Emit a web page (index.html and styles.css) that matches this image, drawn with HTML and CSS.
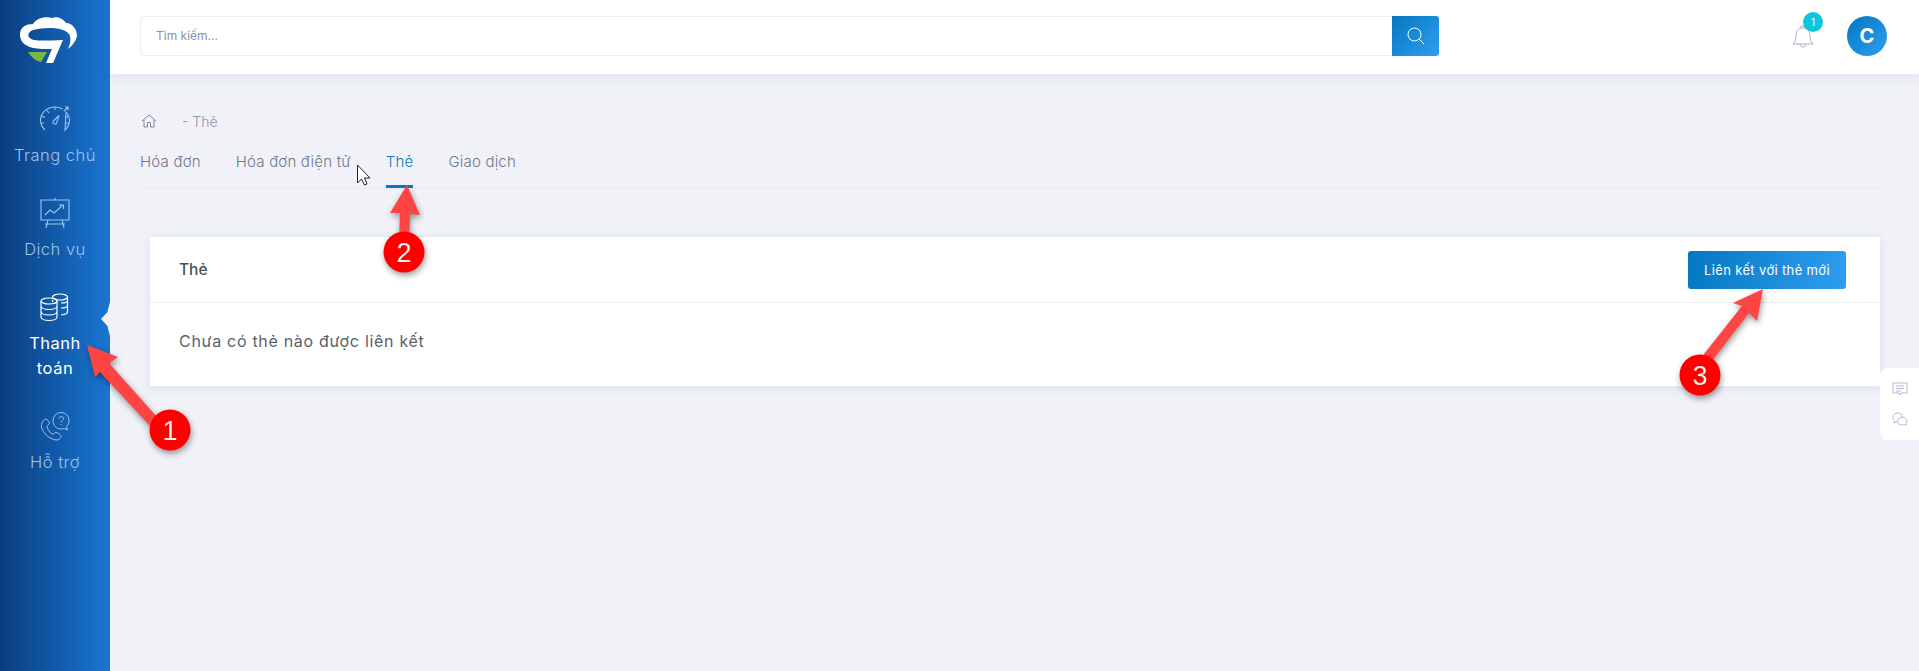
FILE: index.html
```html
<!DOCTYPE html>
<html lang="vi">
	<head>
		<meta charset="UTF-8" />
		<meta name="viewport" content="width=device-width, initial-scale=1.0" />
		<title>Thẻ</title>
		<link rel="stylesheet" href="styles.css">
	</head>
	<body>
		<aside class="sidebar">
			<svg class="logo" width="110" height="74" viewBox="0 0 110 74">
				<path fill="#fff" d="M33 48C24 46 19 40 20 33C21 27 26 24 33 24C36 19 44 16 52 18C58 16 63 19 66 23C72 23 77 29 77 36C76 41 72 46 68 49C70 44 71 40 70 36C69 33 66 31 63 30C54 27 42 28 33 30C28 32 27 36 30 38C33 41 40 41 63 40L53 63L46 63L52 49C45 49 39 49 33 48Z" />
				<path fill="#7ab648" d="M28 52L47 52L41 62C36 61 31 57 28 52Z" />
			</svg>
			<nav class="nav">
				<a class="nav-item">
					<svg viewBox="0 0 32 32" fill="none" stroke="currentColor" stroke-width="1.1">
						<path d="M6 27C3 24 1.500 21 1.500 17.500C1.500 10 8 4 16 4C19 4 21.500 4.800 23.500 6M27 9C29.300 11.500 30.500 14.500 30.500 17.500C30.500 21 29 24 26 27Z" />
						<path d="M25 8L29 4M26 4H29V7M16 4V7M8 7.500L10 10M3 13L6 14.500M2 20H5M29.500 13L26 14.500M30 20H27" />
						<path d="M14 18.500L20 12.500L17.500 20.500C16 22 13 20 14 18.500Z" />
					</svg>
					<span>Trang chủ</span>
				</a>
				<a class="nav-item">
					<svg viewBox="0 0 32 32" fill="none" stroke="currentColor" stroke-width="1.1">
						<path d="M2 3H30V23H2ZM16 1V3M9 23L7 31M23 23L25 31M6 27H26" />
						<path d="M6 18L11 13L15 16L24 8M20 8H24.500V12" />
					</svg>
					<span>Dịch vụ</span>
				</a>
				<a class="nav-item active">
					<svg viewBox="0 0 32 32" fill="none" stroke="currentColor" stroke-width="1.200">
						<ellipse cx="21" cy="6" rx="7.500" ry="3" />
						<path d="M28.500 6V21C28.500 22.500 26 23.500 22 24M13.500 9V11M22 12C26 12 28.500 11 28.500 9.500M22 17C26 17 28.500 16 28.500 14.500" />
						<ellipse cx="10" cy="10" rx="8" ry="3" />
						<path d="M2 10V26C2 28 5.500 29.500 10 29.500C14.500 29.500 18 28 18 26V10M2 15C2 17 5.500 18.500 10 18.500C14.500 18.500 18 17 18 15M2 20.500C2 22.500 5.500 24 10 24C14.500 24 18 22.500 18 20.500" />
					</svg>
					<span>Thanh<br />toán</span>
				</a>
				<a class="nav-item">
					<svg viewBox="0 0 32 32" fill="none" stroke="currentColor" stroke-width="1">
						<path d="M7 9C4 10 2 13 2.500 17C4 23 10 29 17 30C20 30.500 23 27 22 25.500C21 24 18 22.500 17 22.500C15.500 22.500 15 24.500 13.500 24C10.500 22.500 8.500 19.500 8 16.500C8 15 10.500 14.500 10.500 13C10.500 12 8 9 7 9Z" />
						<path d="M22 19C17 19 14 15 14 11C14 6 18 2.500 22 2.500C26.500 2.500 30 6 30 11C30 13.500 29 15.500 27.500 16.500L28.500 20L25 18.500C24 19 23 19 22 19Z" />
						<path d="M20 8.500C20 6 24.500 6 24.500 8.500C24.500 10.500 22.300 10.500 22.300 12.500M22.300 14V15" />
					</svg>
					<span>Hỗ trợ</span>
				</a>
			</nav>
		</aside>

		<div class="main">
			<header class="topbar">
				<form class="search">
					<div class="search-input">Tìm kiếm...</div>
					<button class="search-btn" type="button">
						<svg width="18" height="18" viewBox="0 0 18 18" fill="none" stroke="#fff" stroke-width="1">
							<circle cx="7.500" cy="7.500" r="6.500" />
							<path d="M12 12L17 17" />
						</svg>
					</button>
				</form>
				<div class="bell">
					<svg width="22" height="24" viewBox="0 0 22 24" fill="none" stroke="#a9aec4" stroke-width="1">
						<path d="M1 20C3 18 4 16 4 12C4 7 6 4 11 4C16 4 18 7 18 12C18 16 19 18 21 20ZM9 4V2H13V4M8 20C8 24 14 24 14 20" />
					</svg>
					<span class="bell-badge">1</span>
				</div>
				<div class="avatar">C</div>
			</header>

			<main class="content">
				<div class="breadcrumb">
					<svg width="16" height="14" viewBox="0 0 16 14" fill="none" stroke="#7f8799" stroke-width="1">
						<path d="M1 7L8 1L15 7M3 6V13H6.500V8.500H9.500V13H13V6" />
					</svg>
					<span class="crumb">- Thẻ</span>
				</div>
				<div class="tabs">
					<a class="tab">Hóa đơn</a>
					<a class="tab">Hóa đơn điện tử</a>
					<a class="tab active">Thẻ</a>
					<a class="tab">Giao dịch</a>
				</div>
				<section class="card">
					<div class="card-head">
						<h3 class="card-title">Thẻ</h3>
						<button class="link-btn" type="button">Liên kết với thẻ mới</button>
					</div>
					<div class="card-body">Chưa có thẻ nào được liên kết</div>
				</section>
			</main>
		</div>

		<div class="float-tools">
			<svg width="16" height="14" viewBox="0 0 16 14" fill="none" stroke="#b4b8d2" stroke-width="1">
				<path d="M1 1H15V11H9L8 13L7 11H1ZM4 4H12M4 6.500H12M4 9H9" />
			</svg>
			<svg width="16" height="14" viewBox="0 0 16 14" fill="none" stroke="#b4b8d2" stroke-width="1">
				<path d="M6 1C3 1 1 3 1 5.500C1 7 2 8 2.500 9L2 11L5 10M6 1C8.500 1 10 2.500 10.500 5M5.500 9.500C5.500 7 8 5 10.500 5C13 5 15 7 15 9C15 10 14.500 11 14 11.500L14.500 13L12.500 12.500C10 13.500 5.500 12.500 5.500 9.500Z" />
			</svg>
		</div>

		<!-- hand-drawn annotations on top of the screenshot -->
		<svg class="notes" width="1919" height="671" viewBox="0 0 1919 671">
			<g class="arrow">
				<path fill="#ff4444" d="M87 345L118 357L109 363L158 418L150 426L100 372L95 377Z" />
				<circle cx="170" cy="430" r="20.500" fill="#f00" />
				<text x="170" y="440" class="num">1</text>
			</g>
			<g class="arrow">
				<path fill="#ff4444" d="M407 185L420 215L410 214L409 240H399L400 213L390 213Z" />
				<circle cx="404" cy="252" r="20.500" fill="#f00" />
				<text x="404" y="262" class="num">2</text>
			</g>
			<g class="arrow">
				<path fill="#ff4444" d="M1763 289L1757 321L1749 313L1708 366L1700 359L1742 306L1733 303Z" />
				<circle cx="1700" cy="375" r="20.500" fill="#f00" />
				<text x="1700" y="385" class="num">3</text>
			</g>
			<path fill="#fff" stroke="#222" stroke-width="1" d="M357.500 165V183L361.500 179L364.500 185L367 184L364.500 178L370 178Z" />
		</svg>
	</body>
</html>
```

FILE: styles.css
```css
* {
	box-sizing: border-box;
}
html,
body {
	height: 100%;
}
body {
	position: relative;
	display: flex;
	margin: 0;
	overflow: hidden;
	font-family: Inter, "Open Sans", sans-serif;
	color: #5a5f6a;
	background-color: #f0f2f8;
}

/* sidebar */
.sidebar {
	flex: 0 0 110px;
	background: linear-gradient(90deg, #0a3d7e 0%, #1976d2 100%);
}
.logo {
	display: block;
}
.nav {
	display: flex;
	flex-direction: column;
	gap: 30px;
	padding-top: 29px;
}
.nav-item {
	position: relative;
	display: flex;
	flex-direction: column;
	align-items: center;
	gap: 8px;
	margin-bottom: -1px;
	font-size: 16.5px;
	font-weight: 300;
	letter-spacing: 0.5px;
	line-height: 25px;
	text-align: center;
	color: #9cc3ec;
}
.nav-item svg {
	width: 32px;
	height: 32px;
}
.nav-item.active {
	font-weight: 400;
	color: #fff;
}
.nav-item.active::after {
	content: "";
	position: absolute;
	top: 11px;
	right: 0;
	width: 9px;
	height: 34px;
	background-color: #f0f2f8;
	clip-path: polygon(100% 0, 70% 30%, 0 50%, 70% 70%, 100% 100%);
}

/* top bar */
.main {
	flex: 1;
	display: flex;
	flex-direction: column;
	min-width: 0;
}
.topbar {
	display: flex;
	align-items: center;
	height: 74px;
	padding: 0 32px 2px 30px;
	background-color: #fff;
	box-shadow: 0 2px 12px rgba(60, 70, 110, 0.1);
}
.search {
	display: flex;
	width: 1299px;
	height: 40px;
}
.search-input {
	flex: 1;
	padding-left: 15px;
	font-size: 12px;
	line-height: 38px;
	color: #8a93a8;
	border: 1px solid #ebedf3;
	border-right: none;
	border-radius: 4px 0 0 4px;
}
.search-btn {
	display: flex;
	align-items: center;
	justify-content: center;
	width: 47px;
	padding: 0;
	border: none;
	border-radius: 0 3px 3px 0;
	background: linear-gradient(135deg, #0578c0 0%, #2f9df0 100%);
}
.bell {
	position: relative;
	margin-left: auto;
	height: 24px;
	margin-right: 33px;
}
.bell-badge {
	position: absolute;
	top: -12px;
	left: 11px;
	width: 20px;
	height: 20px;
	font-size: 10px;
	line-height: 20px;
	text-align: center;
	color: #fff;
	border-radius: 50%;
	background-color: #0cc6de;
}
.avatar {
	width: 40px;
	height: 40px;
	font-size: 20px;
	font-weight: 700;
	line-height: 40px;
	text-align: center;
	color: #fff;
	border-radius: 50%;
	background: linear-gradient(135deg, #0578c0 0%, #2f9df0 100%);
}

/* page content */
.content {
	padding: 39px 39px 0 30px;
}
.breadcrumb {
	display: flex;
	align-items: center;
	gap: 25px;
	height: 16px;
	padding-left: 1px;
}
.crumb {
	font-size: 14px;
	font-weight: 300;
	color: #8b94ab;
}
.tabs {
	display: flex;
	gap: 35px;
	height: 60px;
	padding-top: 22px;
	border-bottom: 1px solid #e8eaf1;
}
.tab {
	height: 37px;
	font-size: 15px;
	font-weight: 300;
	letter-spacing: 0.2px;
	line-height: 22px;
	color: #6f778b;
}
.tab.active {
	color: #0a78c2;
	border-bottom: 3px solid #0a78c2;
}
.card {
	margin: 48px 0 0 10px;
	background-color: #fff;
	box-shadow: 0 2px 10px rgba(60, 70, 110, 0.1);
}
.card-head {
	display: flex;
	align-items: center;
	justify-content: space-between;
	height: 66px;
	padding: 0 34px 0 29px;
	border-bottom: 1px solid #eceef4;
}
.card-title {
	margin: 0;
	font-size: 15.5px;
	font-weight: 500;
	color: #4a4f5c;
}
.link-btn {
	width: 158px;
	height: 38px;
	padding: 0;
	font-family: inherit;
	font-size: 13px;
	letter-spacing: 0.35px;
	color: #fff;
	border: none;
	border-radius: 3px;
	background: linear-gradient(100deg, #0578c0 0%, #2f9df0 100%);
}
.card-body {
	height: 83px;
	padding: 27px 29px 0;
	font-size: 16px;
	letter-spacing: 0.7px;
	line-height: 22px;
}

/* little tool strip stuck on the right edge */
.float-tools {
	position: absolute;
	top: 368px;
	right: 0;
	display: flex;
	flex-direction: column;
	align-items: center;
	justify-content: center;
	gap: 16px;
	width: 39px;
	height: 72px;
	border-radius: 8px 0 0 8px;
	background-color: #fff;
}

/* annotations */
.notes {
	position: absolute;
	top: 0;
	left: 0;
	pointer-events: none;
}
.arrow {
	filter: drop-shadow(1px 3px 3px rgba(0, 0, 0, 0.4));
}
.num {
	font-family: "Liberation Sans", sans-serif;
	font-size: 27px;
	text-anchor: middle;
	fill: #f3f3f3;
}
```
